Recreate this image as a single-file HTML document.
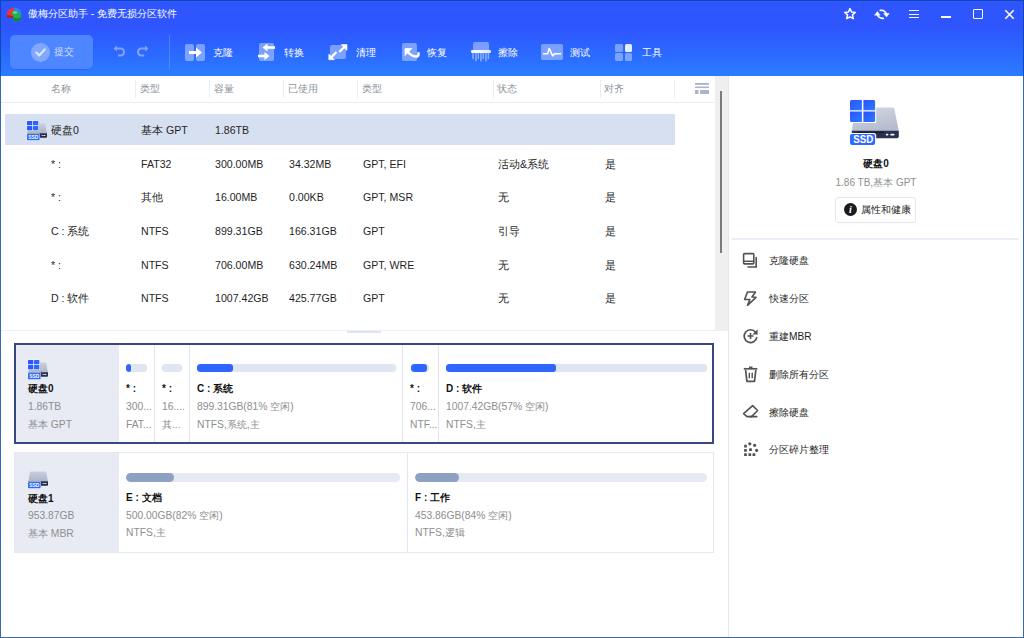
<!DOCTYPE html>
<html><head><meta charset="utf-8">
<style>
*{box-sizing:border-box;margin:0;padding:0}
html,body{width:1024px;height:638px;overflow:hidden;background:#fff}
body{font-family:"Liberation Sans",sans-serif;font-size:10.5px;color:#222;position:relative}
.a{position:absolute}
.t{position:absolute;white-space:nowrap;line-height:14px}
#hdr{position:absolute;left:0;top:0;width:1024px;height:76px;background:linear-gradient(#2f55ff 0px,#2f55ff 27px,#2c66ff 50px,#2a7dff 76px)}
.wt{color:#fff;font-size:10.2px}
.tb{color:#fff;font-size:10.2px}
.th{color:#8d929b;font-size:10.2px}
.td{font-size:10.6px;color:#1f1f1f}
.csep{position:absolute;top:80px;width:1px;height:18px;background:#e9edf5}
.g{color:#8e8e8e;font-size:10.3px}
.b{font-weight:bold;font-size:10px;color:#111}
.bar{position:absolute;height:8px;border-radius:3px;background:#dfe5f1;overflow:hidden}
.bar i{position:absolute;left:0;top:0;bottom:0;border-radius:3px;background:#2f66ff}
.bar2{position:absolute;height:9px;border-radius:4.5px;background:#e4e9f3;overflow:hidden}
.bar2 i{position:absolute;left:0;top:0;bottom:0;border-radius:4.5px;background:#8da1c3}
.psep{position:absolute;width:1px;background:#e3e7f0}
.rm{color:#1e1e1e;font-size:10.2px}
</style></head><body>
<div id="hdr"></div>
<!-- window border -->
<div class="a" style="left:0;top:0;width:1024px;height:638px;border:1px solid rgba(5,67,161,0.8);pointer-events:none;z-index:50"></div>

<!-- app icon -->
<svg class="a" style="left:5px;top:6px" width="18" height="16" viewBox="0 0 18 16">
  <path d="M9 1.5 A7 6.5 0 0 1 16.5 8 L9 8 Z" fill="#2a8cf0" opacity="0.9"/>
  <path d="M2 5 Q5 2 9 1.8 L9 8 L9 10.5 Q5 11 2 12 Z" fill="#e8353a"/>
  <path d="M2 9 Q5 9 9 10.5 L9 12 Q5 11.5 2 12 Z" fill="#a92328"/>
  <path d="M6.5 6 Q9 3.5 12.5 5 L12.5 7 Q16 7.5 16 9 L16 14 Q12 16 8.5 15.5 L8.5 9.5 Q6.5 9 6.5 6 Z" fill="#22b04f"/>
  <path d="M8.5 12 Q12 13 16 11.5 L16 14 Q12 16 8.5 15.5 Z" fill="#17803a"/>
  <ellipse cx="10" cy="6.5" rx="2.4" ry="1.3" fill="#7fe59a" opacity="0.8"/>
</svg>
<!-- title -->
<div class="t wt" style="left:28px;top:6.7px">傲梅分区助手 - 免费无损分区软件</div>

<!-- window controls -->
<svg class="a" style="left:843px;top:7px" width="14" height="14" viewBox="0 0 14 14"><path d="M7 1.6 L8.6 5 L12.3 5.4 L9.5 7.9 L10.3 11.7 L7 9.8 L3.7 11.7 L4.5 7.9 L1.7 5.4 L5.4 5 Z" fill="none" stroke="#fff" stroke-width="1.5" stroke-linejoin="round"/></svg>
<svg class="a" style="left:870px;top:4px" width="24" height="20" viewBox="870 4 24 20"><path d="M880.3 10.3 Q884.6 9.9 886.3 13.8" fill="none" stroke="#fff" stroke-width="1.7" stroke-linecap="round"/><path d="M883.6 13.4 L889.2 13.4 L886.5 17.1 Z" fill="#fff" stroke="#fff" stroke-width="0.5" stroke-linejoin="round"/><path d="M883.3 18.3 Q879 18.7 877.4 14.8" fill="none" stroke="#fff" stroke-width="1.7" stroke-linecap="round"/><path d="M874.6 15.2 L880.2 15.2 L877.4 11.5 Z" fill="#fff" stroke="#fff" stroke-width="0.5" stroke-linejoin="round"/></svg>
<div class="a" style="left:909px;top:9.8px;width:10px;height:1.4px;background:#f2f4ff"></div>
<div class="a" style="left:909px;top:13.5px;width:10px;height:1.4px;background:#f2f4ff"></div>
<div class="a" style="left:909px;top:17.1px;width:10px;height:1.4px;background:#f2f4ff"></div>
<div class="a" style="left:941px;top:16px;width:10px;height:1.6px;background:#fff"></div>
<div class="a" style="left:973px;top:9px;width:10px;height:9.5px;border:1.6px solid #fff;border-radius:1px"></div>
<svg class="a" style="left:1004px;top:9px" width="11" height="11" viewBox="0 0 11 11"><path d="M1.3 1.3 L9.7 9.7 M9.7 1.3 L1.3 9.7" stroke="#fff" stroke-width="1.6"/></svg>

<!-- toolbar -->
<div class="a" style="left:10px;top:35px;width:83px;height:34px;border-radius:5px;background:#4e86ff;box-shadow:0 1px 1px rgba(30,60,200,0.2)"></div>
<div class="a" style="left:31px;top:43px;width:19px;height:19px;border-radius:50%;background:rgba(190,210,255,0.45)"></div>
<svg class="a" style="left:33px;top:45px" width="15" height="15" viewBox="0 0 15 15"><path d="M3.3 7.6 L6.2 10.4 L11.6 4.4" fill="none" stroke="#d9e4ff" stroke-width="2.2" stroke-linecap="round" stroke-linejoin="round"/></svg>
<div class="t tb" style="left:54px;top:45px;color:#d3defd">提交</div>

<svg class="a" style="left:112px;top:45px" width="16" height="13" viewBox="0 0 16 13"><path d="M4 3.5 L9 3.5 A3.6 3.6 0 0 1 9 10.6 L6 10.6" fill="none" stroke="#86a0f9" stroke-width="2"/><path d="M1.5 3.5 L5 0.6 L5 6.4 Z" fill="#86a0f9"/></svg>
<svg class="a" style="left:134px;top:45px" width="16" height="13" viewBox="0 0 16 13"><path d="M12 3.5 L7 3.5 A3.6 3.6 0 0 0 7 10.6 L10 10.6" fill="none" stroke="#86a0f9" stroke-width="2"/><path d="M14.5 3.5 L11 0.6 L11 6.4 Z" fill="#86a0f9"/></svg>
<div class="a" style="left:169px;top:35px;width:1px;height:34px;background:rgba(150,175,255,0.38)"></div>

<!-- clone -->
<div class="a" style="left:185px;top:44px;width:9px;height:17px;border-radius:2px;background:rgba(190,210,255,0.55)"></div>
<div class="a" style="left:196px;top:44px;width:9px;height:17px;border-radius:2px;background:rgba(190,210,255,0.55)"></div>
<svg class="a" style="left:188px;top:46px" width="16" height="13" viewBox="0 0 16 13"><path d="M1 6.5 L9 6.5" stroke="#fff" stroke-width="3"/><path d="M8 1.5 L14 6.5 L8 11.5 Z" fill="#fff"/></svg>
<div class="t tb" style="left:213px;top:45.7px">克隆</div>

<!-- convert -->
<div class="a" style="left:259px;top:43px;width:15px;height:18px;border-radius:2px;background:rgba(190,210,255,0.55)"></div>
<svg class="a" style="left:256px;top:42px" width="22" height="20" viewBox="0 0 22 20"><path d="M11 5.5 L19 5.5" stroke="#fff" stroke-width="2.6"/><path d="M6.5 5.5 L11.5 1.5 L11.5 9.5 Z" fill="#fff"/><path d="M2 14 L9 14" stroke="#fff" stroke-width="2.6"/><path d="M13.5 14 L8.5 10 L8.5 18 Z" fill="#fff"/></svg>
<div class="t tb" style="left:284px;top:45.7px">转换</div>

<!-- clean -->
<div class="a" style="left:329.7px;top:45.2px;width:16.4px;height:13.4px;border-radius:2px;background:rgba(190,210,255,0.55)"></div>
<svg class="a" style="left:327px;top:42px" width="22" height="20" viewBox="0 0 22 20"><path d="M13 9.3 L17.3 5" stroke="#fff" stroke-width="2.3" stroke-linecap="round"/><path d="M14.2 2.6 L20 2.6 L20 8.4 Z" fill="#fff" stroke="#fff" stroke-width="0.6" stroke-linejoin="round"/><path d="M4.5 15 L8.8 10.7" stroke="#fff" stroke-width="2.3" stroke-linecap="round"/><path d="M1.8 12 L1.8 17.7 L7.5 17.7 Z" fill="#fff" stroke="#fff" stroke-width="0.6" stroke-linejoin="round"/></svg>
<div class="t tb" style="left:356px;top:45.7px">清理</div>

<!-- recover -->
<div class="a" style="left:402px;top:43.3px;width:14.8px;height:17.5px;border-radius:2px;background:rgba(190,210,255,0.55)"></div>
<svg class="a" style="left:402px;top:44px" width="20" height="18" viewBox="0 0 20 18"><path d="M3 4.6 L9.8 4.6 L3 11.6 Z" fill="#fff" stroke="#fff" stroke-width="0.8" stroke-linejoin="round"/><path d="M6 8 Q9.5 12.3 13.8 12.6 Q16.8 12.8 16.6 9.2" fill="none" stroke="#fff" stroke-width="2.5" stroke-linecap="round"/></svg>
<div class="t tb" style="left:427px;top:45.7px">恢复</div>

<!-- wipe -->
<div class="a" style="left:472.6px;top:42.2px;width:16.4px;height:8.5px;border-radius:2px 2px 0 0;background:rgba(190,210,255,0.55)"></div>
<div class="a" style="left:470.8px;top:50.3px;width:20.2px;height:2.7px;border-radius:1.35px;background:linear-gradient(90deg,#fff,#dfe8ff)"></div>
<svg class="a" style="left:472px;top:53px" width="18" height="9" viewBox="0 0 18 9"><path d="M1 0 V5.4 M3.9 0 V7.8 M6.3 0 V5.4 M8.9 0 V7.8 M11.3 0 V5.4 M14 0 V7.8 M16.4 0 V5.4" stroke="rgba(205,222,255,0.6)" stroke-width="1.5" stroke-linecap="round"/></svg>
<div class="t tb" style="left:498px;top:45.7px">擦除</div>

<!-- test -->
<div class="a" style="left:541px;top:44px;width:22px;height:16px;border-radius:2px;background:rgba(190,210,255,0.55)"></div>
<svg class="a" style="left:541px;top:44px" width="22" height="16" viewBox="0 0 22 16"><path d="M2 9.8 L6.6 9.8 L8.2 4.6 L11.8 11.9 L13.6 9.8 L20.2 9.8" fill="none" stroke="#fff" stroke-width="1.6" stroke-linejoin="round"/></svg>
<div class="t tb" style="left:570px;top:45.7px">测试</div>

<!-- tools -->
<div class="a" style="left:615px;top:44px;width:7.5px;height:7.5px;border-radius:1.5px;background:rgba(190,210,255,0.55)"></div>
<div class="a" style="left:624.5px;top:44px;width:7.5px;height:7.5px;border-radius:1.5px;background:#e4ecff"></div>
<div class="a" style="left:615px;top:53px;width:7.5px;height:7.5px;border-radius:1.5px;background:rgba(190,210,255,0.55)"></div>
<div class="a" style="left:624.5px;top:53px;width:7.5px;height:7.5px;border-radius:1.5px;background:rgba(190,210,255,0.55)"></div>
<div class="t tb" style="left:642px;top:45.7px">工具</div>

<!-- ============ table ============ -->
<div class="t th" style="left:51px;top:82px">名称</div>
<div class="t th" style="left:140px;top:82px">类型</div>
<div class="t th" style="left:214px;top:82px">容量</div>
<div class="t th" style="left:288px;top:82px">已使用</div>
<div class="t th" style="left:362px;top:82px">类型</div>
<div class="t th" style="left:497px;top:82px">状态</div>
<div class="t th" style="left:604px;top:82px">对齐</div>
<div class="csep" style="left:135px"></div>
<div class="csep" style="left:209px"></div>
<div class="csep" style="left:283px"></div>
<div class="csep" style="left:357px"></div>
<div class="csep" style="left:493px"></div>
<div class="csep" style="left:600px"></div>
<div class="csep" style="left:674px"></div>
<svg class="a" style="left:695px;top:83px" width="14" height="11" viewBox="0 0 14 11"><rect x="0" y="0" width="14" height="1.8" fill="#a9b4c9"/><rect x="0" y="3.5" width="14" height="1.6" fill="#a9b4c9"/><rect x="0" y="7" width="3.5" height="4" fill="#a9b4c9"/><rect x="5" y="7" width="9" height="4" fill="#a9b4c9"/></svg>
<div class="a" style="left:1px;top:101.5px;width:713px;height:1px;background:#e8ecf4"></div>

<!-- scrollbar -->
<div class="a" style="left:715px;top:76px;width:13px;height:254px;background:#efefef"></div>
<div class="a" style="left:720px;top:91px;width:2px;height:162px;background:#7b7b7b"></div>
<div class="a" style="left:728px;top:76px;width:1px;height:562px;background:#e3e8f2"></div>

<!-- rows -->
<div class="a" style="left:5px;top:113.5px;width:670px;height:31.5px;background:#d6e0f0"></div>
<svg class="a" style="left:25px;top:119px" width="26" height="24" viewBox="-2 -2 26 24">
  <defs><linearGradient id="sga" x1="0" y1="0" x2="0" y2="1"><stop offset="0" stop-color="#c9cfdd"/><stop offset="1" stop-color="#adb4c9"/></linearGradient></defs>
  <path d="M1.8 3.6 Q2 2.4 3.2 2.4 L17 2.4 Q18.1 2.4 18.3 3.6 L20 12.5 L0.3 12.5 Z" fill="url(#sga)"/>
  <path d="M0.2 12.2 H20 V15.8 Q20 16.8 19 16.8 H0.2 Z" fill="#282d4a"/>
  <rect x="14.6" y="14" width="1.2" height="1" fill="#e8ebf5"/><rect x="16.4" y="14" width="2" height="1" fill="#e8ebf5"/>
  <rect x="-0.4" y="-0.4" width="12.1" height="9.9" fill="#f4f6fb"/>
  <rect x="0" y="0" width="5.3" height="4.3" rx="0.4" fill="#2a58ff"/><rect x="6" y="0" width="5.3" height="4.3" rx="0.4" fill="#2b64ff"/>
  <rect x="0" y="5" width="5.3" height="4.2" rx="0.4" fill="#2a5aff"/><rect x="6" y="5" width="5.3" height="4.2" rx="0.4" fill="#2b68ff"/>
  <rect x="-0.4" y="12.6" width="13.4" height="7.1" rx="1" fill="#f4f6fb"/>
  <rect x="0" y="13.1" width="12.6" height="6.2" rx="0.9" fill="#2a6cff"/>
  <text x="6.3" y="18.3" font-size="5.6" font-weight="bold" fill="#fff" text-anchor="middle" font-family="Liberation Sans" textLength="10" lengthAdjust="spacingAndGlyphs">SSD</text>
</svg>
<div class="t td" style="left:51px;top:123px">硬盘0</div>
<div class="t td" style="left:141px;top:123px">基本 GPT</div>
<div class="t td" style="left:215px;top:123px">1.86TB</div>

<div class="t td" style="left:51px;top:156.5px">* :</div>
<div class="t td" style="left:141px;top:156.5px">FAT32</div>
<div class="t td" style="left:215px;top:156.5px">300.00MB</div>
<div class="t td" style="left:289px;top:156.5px">34.32MB</div>
<div class="t td" style="left:363px;top:156.5px">GPT, EFI</div>
<div class="t td" style="left:498px;top:156.5px">活动&amp;系统</div>
<div class="t td" style="left:605px;top:156.5px">是</div>

<div class="t td" style="left:51px;top:190px">* :</div>
<div class="t td" style="left:141px;top:190px">其他</div>
<div class="t td" style="left:215px;top:190px">16.00MB</div>
<div class="t td" style="left:289px;top:190px">0.00KB</div>
<div class="t td" style="left:363px;top:190px">GPT, MSR</div>
<div class="t td" style="left:498px;top:190px">无</div>
<div class="t td" style="left:605px;top:190px">是</div>

<div class="t td" style="left:51px;top:224px">C : 系统</div>
<div class="t td" style="left:141px;top:224px">NTFS</div>
<div class="t td" style="left:215px;top:224px">899.31GB</div>
<div class="t td" style="left:289px;top:224px">166.31GB</div>
<div class="t td" style="left:363px;top:224px">GPT</div>
<div class="t td" style="left:498px;top:224px">引导</div>
<div class="t td" style="left:605px;top:224px">是</div>

<div class="t td" style="left:51px;top:257.5px">* :</div>
<div class="t td" style="left:141px;top:257.5px">NTFS</div>
<div class="t td" style="left:215px;top:257.5px">706.00MB</div>
<div class="t td" style="left:289px;top:257.5px">630.24MB</div>
<div class="t td" style="left:363px;top:257.5px">GPT, WRE</div>
<div class="t td" style="left:498px;top:257.5px">无</div>
<div class="t td" style="left:605px;top:257.5px">是</div>

<div class="t td" style="left:51px;top:291px">D : 软件</div>
<div class="t td" style="left:141px;top:291px">NTFS</div>
<div class="t td" style="left:215px;top:291px">1007.42GB</div>
<div class="t td" style="left:289px;top:291px">425.77GB</div>
<div class="t td" style="left:363px;top:291px">GPT</div>
<div class="t td" style="left:498px;top:291px">无</div>
<div class="t td" style="left:605px;top:291px">是</div>

<div class="a" style="left:1px;top:329.5px;width:727px;height:1px;background:#eceff7"></div>
<div class="a" style="left:347px;top:331px;width:34px;height:2px;background:#dfe6f2"></div>

<!-- ============ disk map ============ -->
<div class="a" style="left:14px;top:343px;width:700px;height:101px;border:2px solid #384781;background:#fff"></div>
<div class="a" style="left:16px;top:345px;width:103px;height:97px;background:#e8ebf4"></div>
<svg class="a" style="left:25.8px;top:357.8px" width="26" height="24" viewBox="-2 -2 26 24">
  <defs><linearGradient id="sgb" x1="0" y1="0" x2="0" y2="1"><stop offset="0" stop-color="#c9cfdd"/><stop offset="1" stop-color="#adb4c9"/></linearGradient></defs>
  <path d="M1.8 3.6 Q2 2.4 3.2 2.4 L17 2.4 Q18.1 2.4 18.3 3.6 L20 12.5 L0.3 12.5 Z" fill="url(#sgb)"/>
  <path d="M0.2 12.2 H20 V15.8 Q20 16.8 19 16.8 H0.2 Z" fill="#282d4a"/>
  <rect x="14.6" y="14" width="1.2" height="1" fill="#e8ebf5"/><rect x="16.4" y="14" width="2" height="1" fill="#e8ebf5"/>
  <rect x="-0.4" y="-0.4" width="12.1" height="9.9" fill="#f4f6fb"/>
  <rect x="0" y="0" width="5.3" height="4.3" rx="0.4" fill="#2a58ff"/><rect x="6" y="0" width="5.3" height="4.3" rx="0.4" fill="#2b64ff"/>
  <rect x="0" y="5" width="5.3" height="4.2" rx="0.4" fill="#2a5aff"/><rect x="6" y="5" width="5.3" height="4.2" rx="0.4" fill="#2b68ff"/>
  <rect x="-0.4" y="12.6" width="13.4" height="7.1" rx="1" fill="#f4f6fb"/>
  <rect x="0" y="13.1" width="12.6" height="6.2" rx="0.9" fill="#2a6cff"/>
  <text x="6.3" y="18.3" font-size="5.6" font-weight="bold" fill="#fff" text-anchor="middle" font-family="Liberation Sans" textLength="10" lengthAdjust="spacingAndGlyphs">SSD</text>
</svg>
<div class="t b" style="left:28px;top:381.8px">硬盘0</div>
<div class="t g" style="left:28px;top:399.8px">1.86TB</div>
<div class="t g" style="left:28px;top:417.8px">基本 GPT</div>

<div class="psep" style="left:154px;top:345px;height:97px"></div>
<div class="psep" style="left:189px;top:345px;height:97px"></div>
<div class="psep" style="left:402px;top:345px;height:97px"></div>
<div class="psep" style="left:438px;top:345px;height:97px"></div>

<div class="bar" style="left:126px;top:364px;width:21px"><i style="width:4.5px"></i></div>
<div class="t b" style="left:126px;top:381.8px">* :</div>
<div class="t g" style="left:126px;top:399.8px">300...</div>
<div class="t g" style="left:126px;top:417.8px">FAT...</div>

<div class="bar" style="left:162px;top:364px;width:20px"></div>
<div class="t b" style="left:162px;top:381.8px">* :</div>
<div class="t g" style="left:162px;top:399.8px">16....</div>
<div class="t g" style="left:162px;top:417.8px">其...</div>

<div class="bar" style="left:197px;top:364px;width:199px"><i style="width:36px"></i></div>
<div class="t b" style="left:197px;top:381.8px">C : 系统</div>
<div class="t g" style="left:197px;top:399.8px">899.31GB(81% 空闲)</div>
<div class="t g" style="left:197px;top:417.8px">NTFS,系统,主</div>

<div class="bar" style="left:410.5px;top:364px;width:18px"><i style="width:16.5px"></i></div>
<div class="t b" style="left:410px;top:381.8px">* :</div>
<div class="t g" style="left:410px;top:399.8px">706...</div>
<div class="t g" style="left:410px;top:417.8px">NTF...</div>

<div class="bar" style="left:446px;top:364px;width:261px"><i style="width:110px"></i></div>
<div class="t b" style="left:446px;top:381.8px">D : 软件</div>
<div class="t g" style="left:446px;top:399.8px">1007.42GB(57% 空闲)</div>
<div class="t g" style="left:446px;top:417.8px">NTFS,主</div>

<!-- disk 1 -->
<div class="a" style="left:14px;top:452px;width:700px;height:100.5px;border:1px solid #e5e8ef;background:#fff"></div>
<div class="a" style="left:15px;top:453px;width:104px;height:98.5px;background:#e8ebf4"></div>
<svg class="a" style="left:25.8px;top:467px" width="26" height="24" viewBox="-2 -2 26 24">
  <defs><linearGradient id="sgc" x1="0" y1="0" x2="0" y2="1"><stop offset="0" stop-color="#c9cfdd"/><stop offset="1" stop-color="#adb4c9"/></linearGradient></defs>
  <path d="M1.8 3.6 Q2 2.4 3.2 2.4 L17 2.4 Q18.1 2.4 18.3 3.6 L20 12.5 L0.3 12.5 Z" fill="url(#sgc)"/>
  <path d="M0.2 12.2 H20 V15.8 Q20 16.8 19 16.8 H0.2 Z" fill="#282d4a"/>
  <rect x="14.6" y="14" width="1.2" height="1" fill="#e8ebf5"/><rect x="16.4" y="14" width="2" height="1" fill="#e8ebf5"/>
  
  <rect x="-0.4" y="12.6" width="13.4" height="7.1" rx="1" fill="#f4f6fb"/>
  <rect x="0" y="13.1" width="12.6" height="6.2" rx="0.9" fill="#2a6cff"/>
  <text x="6.3" y="18.3" font-size="5.6" font-weight="bold" fill="#fff" text-anchor="middle" font-family="Liberation Sans" textLength="10" lengthAdjust="spacingAndGlyphs">SSD</text>
</svg>
<div class="t b" style="left:28px;top:491.8px">硬盘1</div>
<div class="t g" style="left:28px;top:509.3px">953.87GB</div>
<div class="t g" style="left:28px;top:526.8px">基本 MBR</div>

<div class="psep" style="left:407px;top:453px;height:99px"></div>
<div class="bar2" style="left:126px;top:473px;width:274px"><i style="width:48px"></i></div>
<div class="t b" style="left:126px;top:490.8px">E : 文档</div>
<div class="t g" style="left:126px;top:508.8px">500.00GB(82% 空闲)</div>
<div class="t g" style="left:126px;top:526.3px">NTFS,主</div>

<div class="bar2" style="left:415px;top:473px;width:292px"><i style="width:44px"></i></div>
<div class="t b" style="left:415px;top:490.8px">F : 工作</div>
<div class="t g" style="left:415px;top:508.8px">453.86GB(84% 空闲)</div>
<div class="t g" style="left:415px;top:526.3px">NTFS,逻辑</div>

<!-- ============ right panel ============ -->
<svg class="a" style="left:844px;top:94px" width="60" height="56" viewBox="844 94 60 56">
  <defs><linearGradient id="bg1" x1="0" y1="0" x2="0.4" y2="1"><stop offset="0" stop-color="#d3d7e3"/><stop offset="1" stop-color="#b7bdd0"/></linearGradient>
  <linearGradient id="bw" x1="0" y1="0" x2="1" y2="1"><stop offset="0" stop-color="#2d52ff"/><stop offset="1" stop-color="#2d7aff"/></linearGradient></defs>
  <path d="M855 107.6 L892.5 107.6 Q894 107.6 894.4 109 L898.8 131 L851.8 131 Z" fill="url(#bg1)"/>
  <path d="M851.8 130.8 H898.8 V136.3 Q898.8 138.3 896.8 138.3 H851.8 Z" fill="#2a3050"/>
  <rect x="857" y="131.6" width="27" height="1.6" fill="#1a1e33"/>
  <rect x="885.8" y="133.8" width="2.6" height="1.7" rx="0.8" fill="#fff"/><rect x="890.3" y="133.8" width="4.2" height="1.7" rx="0.8" fill="#fff"/>
  <rect x="849" y="99" width="27.2" height="24" fill="#fff"/>
  <path d="M851.5 100 H861.9 V110.2 H850 V101.5 Q850 100 851.5 100 Z" fill="url(#bw)"/>
  <path d="M863.4 100 H873.6 Q875.1 100 875.1 101.5 V110.2 H863.4 Z" fill="url(#bw)"/>
  <path d="M850 111.6 H861.9 V121.9 H851.5 Q850 121.9 850 120.4 Z" fill="url(#bw)"/>
  <path d="M863.4 111.6 H875.1 V120.4 Q875.1 121.9 873.6 121.9 H863.4 Z" fill="url(#bw)"/>
  <rect x="849" y="132.9" width="27.2" height="13" rx="2.5" fill="#fff"/>
  <rect x="850" y="133.9" width="25.1" height="11" rx="1.8" fill="#2f6bff"/>
  <text x="863.3" y="143" font-size="10" font-weight="bold" fill="#fff" text-anchor="middle" font-family="Liberation Sans" textLength="20" lengthAdjust="spacingAndGlyphs">SSD</text>
</svg>
<div class="t b" style="left:829px;top:157px;width:94px;text-align:center">硬盘0</div>
<div class="t g" style="left:819px;top:176px;width:114px;text-align:center;font-size:10px">1.86 TB,基本 GPT</div>
<div class="a" style="left:835px;top:197px;width:81px;height:26px;border:1px solid #e4e7ee;border-radius:3px;background:#fff"></div>
<div class="a" style="left:844px;top:203px;width:13px;height:13px;border-radius:50%;background:#1b1b1b"></div>
<div class="t" style="left:844px;top:202.5px;width:13px;text-align:center;color:#fff;font-size:10px;font-weight:bold;font-style:italic;font-family:'Liberation Serif',serif">i</div>
<div class="t rm" style="left:861px;top:203px">属性和健康</div>
<div class="a" style="left:732px;top:238.3px;width:287px;height:1.6px;background:#eaeef7"></div>

<svg class="a" style="left:742px;top:252px" width="17" height="17" viewBox="0 0 17 17"><rect x="1.6" y="1.6" width="10.2" height="10.3" rx="1" fill="none" stroke="#505257" stroke-width="1.6"/><path d="M1.6 9.3 H11.8" stroke="#505257" stroke-width="1.5"/><path d="M14.2 5.5 V15 H6" fill="none" stroke="#505257" stroke-width="1.6" stroke-linecap="round"/></svg>
<div class="t rm" style="left:769px;top:254px">克隆硬盘</div>
<svg class="a" style="left:742px;top:289px" width="17" height="17" viewBox="0 0 17 17"><path d="M5.5 3 L13.5 3 L10 8 L14 8.3 L5.5 16.3 L7.8 10.5 L2.6 10.5 Z" fill="none" stroke="#505257" stroke-width="1.6" stroke-linejoin="round"/></svg>
<div class="t rm" style="left:769px;top:291.5px">快速分区</div>
<svg class="a" style="left:742px;top:328px" width="17" height="17" viewBox="0 0 17 17"><path d="M13.6 4.2 A6.4 6.4 0 1 0 14.9 9.2" fill="none" stroke="#505257" stroke-width="1.7"/><path d="M15.6 1.2 L15.6 6.6 L10.4 6.4 Z" fill="#505257"/><path d="M8.5 5 V11 M5.5 8 H11.5" stroke="#505257" stroke-width="1.6"/></svg>
<div class="t rm" style="left:769px;top:329.5px">重建MBR</div>
<svg class="a" style="left:742px;top:366px" width="17" height="17" viewBox="0 0 17 17"><path d="M1.8 2.8 H15.4" stroke="#505257" stroke-width="1.7"/><path d="M7 1.3 H10.5" stroke="#505257" stroke-width="1.5"/><path d="M3.6 4 L4.9 15.3 H12.5 L13.8 4" fill="none" stroke="#505257" stroke-width="1.7" stroke-linejoin="round"/><path d="M7.3 6.8 V12.2 M10.2 6.8 V12.2" stroke="#505257" stroke-width="1.4"/></svg>
<div class="t rm" style="left:769px;top:367.5px">删除所有分区</div>
<svg class="a" style="left:742px;top:403px" width="17" height="17" viewBox="0 0 17 17"><path d="M1.6 10.6 L10.6 2.6 L15.6 7.5 L9.6 13.6 H5 Z" fill="none" stroke="#505257" stroke-width="1.6" stroke-linejoin="round"/><path d="M8 13.6 H14.8" stroke="#505257" stroke-width="1.6" stroke-linecap="round"/></svg>
<div class="t rm" style="left:769px;top:405.5px">擦除硬盘</div>
<svg class="a" style="left:742px;top:441px" width="17" height="17" viewBox="0 0 17 17" fill="#505257"><rect x="2.1" y="3.8" width="2.8" height="2.8" rx="0.4"/><circle cx="7.8" cy="2.8" r="1.6"/><circle cx="12.6" cy="4.3" r="1.6"/><rect x="2.1" y="7.9" width="2.8" height="2.8" rx="0.4"/><rect x="7.1" y="7.3" width="2.8" height="2.8" rx="0.4"/><circle cx="14.6" cy="9.3" r="1.6"/><rect x="2.1" y="12.3" width="2.8" height="2.8" rx="0.4"/><rect x="6.4" y="12.3" width="2.8" height="2.8" rx="0.4"/><rect x="10.5" y="12.3" width="2.8" height="2.8" rx="0.4"/></svg>
<div class="t rm" style="left:769px;top:442.5px">分区碎片整理</div>
</body></html>
